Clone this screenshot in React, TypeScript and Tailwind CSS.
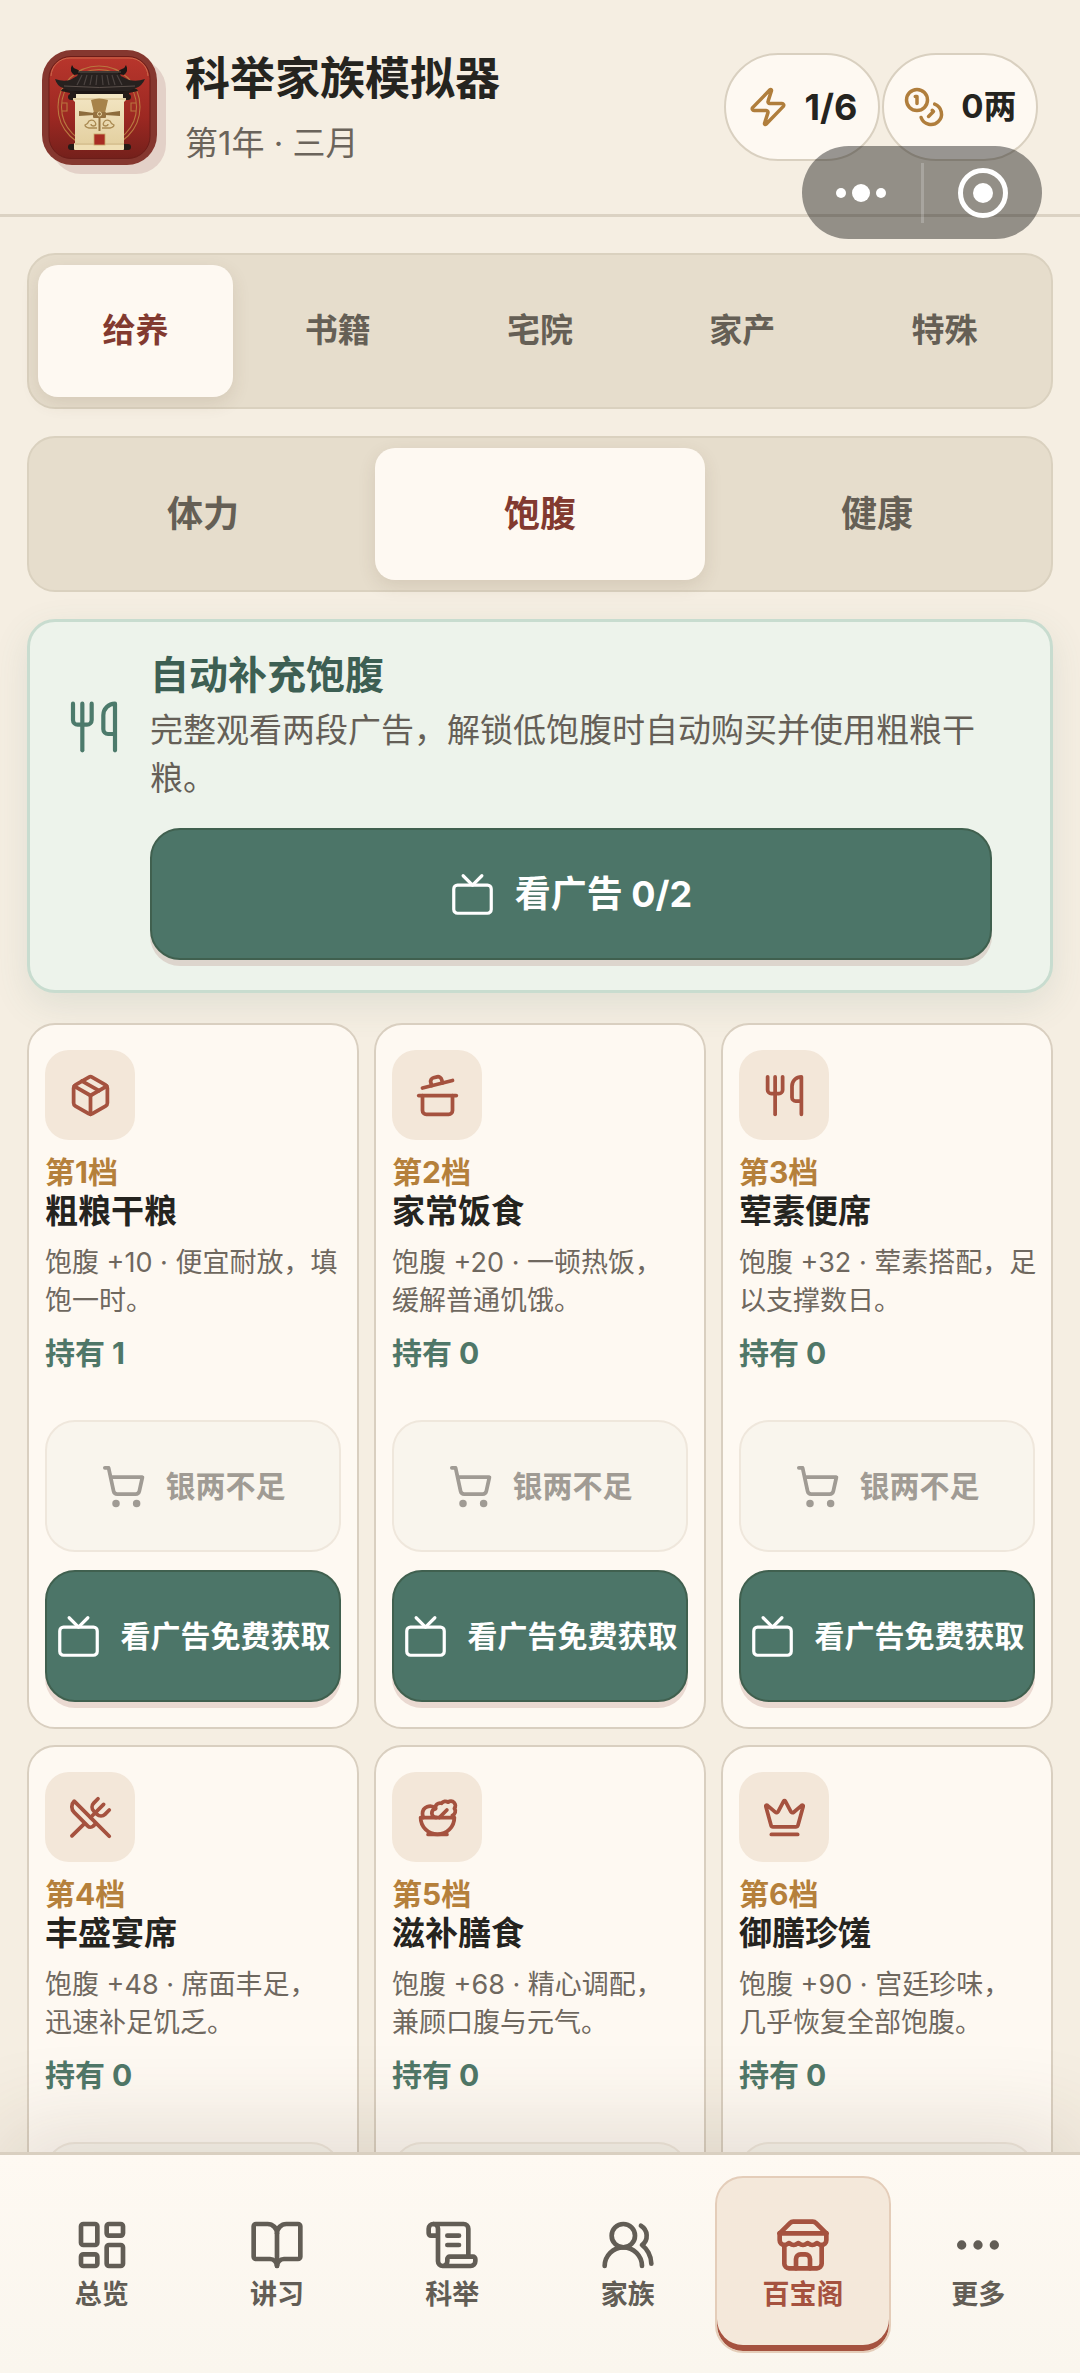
import {
  BookOpen,
  CookingPot,
  Crown,
  Ellipsis,
  LayoutDashboard,
  Package,
  Salad,
  ScrollText,
  ShoppingCart,
  Tv,
  UsersRound,
  Utensils,
  UtensilsCrossed,
  Zap,
} from "lucide-react";

const categories = ["给养", "书籍", "宅院", "家产", "特殊"];
const needs = ["体力", "饱腹", "健康"];

const goods = [
  { tier: "第1档", name: "粗粮干粮", desc: "饱腹 +10 · 便宜耐放，填\n饱一时。", owned: 1, icon: Package },
  { tier: "第2档", name: "家常饭食", desc: "饱腹 +20 · 一顿热饭，\n缓解普通饥饿。", owned: 0, icon: CookingPot },
  { tier: "第3档", name: "荤素便席", desc: "饱腹 +32 · 荤素搭配，足\n以支撑数日。", owned: 0, icon: Utensils },
  { tier: "第4档", name: "丰盛宴席", desc: "饱腹 +48 · 席面丰足，\n迅速补足饥乏。", owned: 0, icon: UtensilsCrossed },
  { tier: "第5档", name: "滋补膳食", desc: "饱腹 +68 · 精心调配，\n兼顾口腹与元气。", owned: 0, icon: Salad },
  { tier: "第6档", name: "御膳珍馐", desc: "饱腹 +90 · 宫廷珍味，\n几乎恢复全部饱腹。", owned: 0, icon: Crown },
];

const navItems = [
  { label: "总览", icon: LayoutDashboard },
  { label: "讲习", icon: BookOpen },
  { label: "科举", icon: ScrollText },
  { label: "家族", icon: UsersRound },
  { label: "百宝阁", icon: StoreIcon, active: true },
  { label: "更多", icon: Ellipsis },
];

function StoreIcon({ className }: { className?: string }) {
  return (
    <svg
      viewBox="0 0 24 24"
      fill="none"
      stroke="currentColor"
      strokeWidth="2"
      strokeLinecap="round"
      strokeLinejoin="round"
      className={className}
    >
      <path d="m2 7 4.41-4.41A2 2 0 0 1 7.83 2h8.34a2 2 0 0 1 1.42.59L22 7" />
      <path d="M4 12v8a2 2 0 0 0 2 2h12a2 2 0 0 0 2-2v-8" />
      <path d="M15 22v-4a2 2 0 0 0-2-2h-2a2 2 0 0 0-2 2v4" />
      <path d="M2 7h20" />
      <path d="M22 7v3a2 2 0 0 1-2 2a2.7 2.7 0 0 1-1.59-.63.7.7 0 0 0-.82 0A2.7 2.7 0 0 1 16 12a2.7 2.7 0 0 1-1.59-.63.7.7 0 0 0-.82 0A2.7 2.7 0 0 1 12 12a2.7 2.7 0 0 1-1.59-.63.7.7 0 0 0-.82 0A2.7 2.7 0 0 1 8 12a2.7 2.7 0 0 1-1.59-.63.7.7 0 0 0-.82 0A2.7 2.7 0 0 1 4 12a2 2 0 0 1-2-2V7" />
    </svg>
  );
}

function CoinsIcon({ className }: { className?: string }) {
  return (
    <svg
      viewBox="0 0 24 24"
      fill="none"
      stroke="currentColor"
      strokeWidth="2"
      strokeLinecap="round"
      strokeLinejoin="round"
      className={className}
    >
      <circle cx="8" cy="8" r="6" />
      <path d="M18.09 10.37A6 6 0 1 1 10.34 18" />
      <path d="M7 6h1v4" />
      <path d="m16.71 13.88.7.71-2.82 2.82" />
    </svg>
  );
}

function Logo() {
  return (
    <svg
      viewBox="0 0 115 115"
      className="size-[115px] shrink-0 rounded-[30px] shadow-[9px_9px_0_#e3d1c8]"
      role="img"
      aria-label="科举家族模拟器"
    >
      <defs>
        <linearGradient id="lacquer" x1="0" y1="0" x2="0" y2="1">
          <stop offset="0" stopColor="#b8362c" />
          <stop offset="0.6" stopColor="#9c2822" />
          <stop offset="1" stopColor="#74201b" />
        </linearGradient>
        <linearGradient id="paper" x1="0" y1="0" x2="0" y2="1">
          <stop offset="0" stopColor="#f3e6c4" />
          <stop offset="1" stopColor="#e3cf9f" />
        </linearGradient>
      </defs>
      <rect width="115" height="115" fill="#85372f" />
      <rect x="7" y="6.500" width="101" height="102" rx="22" fill="url(#lacquer)" stroke="#6b1d19" strokeWidth="1" />
      <path d="M9 26A19 19 0 0 1 28 8h59a19 19 0 0 1 19 18" fill="none" stroke="#d07a55" strokeWidth="0.800" />

      {/* gold ring behind the gate */}
      <g fill="none" stroke="#b9773f" strokeWidth="1.100">
        <circle cx="57" cy="57" r="41" />
        <circle cx="57" cy="57" r="37.500" />
        <path d="M20 53h5v8h-5M94 53h-5v8h5" />
      </g>

      {/* scroll */}
      <rect x="26" y="44" width="63" height="6" rx="3" fill="#241b17" />
      <path d="M31 43h53v7l-2 2v44H33V52l-2-2z" fill="url(#paper)" />
      <path d="M31 49h53" stroke="#c9ad76" strokeWidth="0.800" />
      <rect x="26" y="94" width="63" height="6" rx="3" fill="#241b17" />
      <rect x="32" y="93" width="50" height="7" rx="1" fill="#efdfb5" />
      <path d="M33 94h49" stroke="#b99a62" strokeWidth="0.800" />

      {/* official's hat and clouds */}
      <path d="M49 50q8-3 17 0l-3 13H52z" fill="#a7834a" />
      <path d="M37 61l15 2v2l-15 1zM78 61l-15 2v2l15 1z" fill="#8d6c3c" />
      <rect x="51" y="62" width="13" height="6" rx="1" fill="#957240" />
      <circle cx="57.500" cy="64" r="2" fill="none" stroke="#e6d3a2" strokeWidth="1" />
      <path d="M57.500 67v14" stroke="#967542" strokeWidth="2" />
      <path
        d="M55 78H47q-4-1-4-3 3-1 4-4 4-2 6 1 2 3-1 4-3 0-3-2M60 78h8q4-1 4-3-3-1-4-4-4-2-6 1-2 3 1 4 3 0 3-2"
        fill="none"
        stroke="#aa8a52"
        strokeWidth="1.300"
      />
      <rect x="52" y="84" width="11" height="11" fill="#a82c23" stroke="#c9a86a" strokeWidth="0.800" />

      {/* tiled roof */}
      <path d="M28 37h58v7H28z" fill="#1d1614" />
      <path d="M24 38q-4 0-5 3l9 2v5h6v-6zM91 38q4 0 5 3l-9 2v5h-6v-6z" fill="#241b18" />
      <path
        d="M38 21h38l3 5 8 4q8 2 16-1-3 7-9 9l-7 3H28l-7-3q-6-2-8-9 8 3 15 1l7-4z"
        fill="#27211f"
      />
      <path d="M30 15q-3 6 2 10l6-1q0-4-4-5-3-1-4-4zM84 15q3 6-2 10l-6-1q0-4 4-5 3-1 4-4z" fill="#1c1715" />
      <path
        d="M40 25l-5 10M45 25l-3 10M50 25l-2 10M55 25l-1 10M60 25l1 10M65 25l2 10M70 25l3 10M75 25l5 10"
        stroke="#4b4340"
        strokeWidth="1.200"
      />
      <path d="M36 22h43M22 36q35 3 71 0" fill="none" stroke="#5b504b" strokeWidth="1" />
    </svg>
  );
}

function Tabs({ items, active, label, size }: { items: string[]; active: string; label: string; size: string }) {
  return (
    <div
      role="tablist"
      aria-label={label}
      className="flex gap-[7px] rounded-[28px] border-2 border-[#dad1bf] bg-[#e6ddcc] px-[9px] py-[10px]"
    >
      {items.map((item) => (
        <button
          key={item}
          role="tab"
          aria-selected={item === active}
          className={`h-[132px] flex-1 rounded-[20px] font-bold ${size} ${
            item === active
              ? "bg-[#fef9f2] text-[#823a30] shadow-[0_6px_18px_rgba(90,65,40,0.12)]"
              : "text-[#655f55]"
          }`}
        >
          {item}
        </button>
      ))}
    </div>
  );
}

export default function App() {
  return (
    <div className="relative flex h-screen flex-col overflow-hidden bg-[#f5eee2] font-[Inter,'Noto_Sans_CJK_SC',sans-serif] text-[#25241f]">
      <header className="flex items-center border-b-[3px] border-[#dbd2c3] px-[42px] py-[47px]">
        <Logo />
        <div className="ml-7 min-w-0 flex-1">
          <h1 className="text-[45px] leading-[64px] font-bold">科举家族模拟器</h1>
          <p className="mt-2 text-[33px] leading-[48px] text-[#6b645b]">第1年 · 三月</p>
        </div>
        <div className="flex gap-[2px] font-bold">
          <div className="flex h-[108px] min-w-[156px] items-center justify-center gap-4 rounded-full border-2 border-[#d9d0c0] bg-[#fef9f2]">
            <Zap className="size-[42px] text-[#b07e3c]" />
            <span className="text-[36px]">1/6</span>
          </div>
          <div className="flex h-[108px] min-w-[156px] items-center justify-center gap-4 rounded-full border-2 border-[#d9d0c0] bg-[#fef9f2]">
            <CoinsIcon className="size-[42px] text-[#b07e3c]" />
            <span className="text-[33px]">0两</span>
          </div>
        </div>
      </header>

      {/* host app capsule, floats over the header */}
      <div className="absolute top-[146px] right-[38px] z-20 flex h-[93px] w-[240px] items-center rounded-full bg-black/40">
        <button aria-label="更多" className="flex h-full flex-1 items-center justify-center gap-[6px]">
          <span className="size-[10px] rounded-full bg-white" />
          <span className="size-[18px] rounded-full bg-white" />
          <span className="size-[10px] rounded-full bg-white" />
        </button>
        <span className="h-[60px] w-[3px] bg-white/20" />
        <button aria-label="关闭" className="flex h-full flex-1 items-center justify-center">
          <span className="flex size-[50px] items-center justify-center rounded-full border-[5px] border-white">
            <span className="size-5 rounded-full bg-white" />
          </span>
        </button>
      </div>

      <main className="flex min-h-0 flex-1 flex-col gap-[27px] overflow-y-auto px-[27px] pt-9 [scrollbar-width:none]">
        <Tabs items={categories} active="给养" label="分类" size="text-[33px]" />
        <Tabs items={needs} active="饱腹" label="需求" size="text-[36px]" />

        <section className="grid grid-cols-[56px_1fr] gap-x-7 gap-y-[26px] rounded-[28px] border-[3px] border-[#c8dccf] bg-[#edf3eb] py-[30px] pr-[58px] pl-9 shadow-[0_12px_36px_rgba(76,117,104,0.12)]">
          <Utensils strokeWidth={1.8} className="size-14 self-center text-[#4c7a6b]" />
          <div>
            <h2 className="text-[39px] leading-[46px] font-bold text-[#3d5f53]">自动补充饱腹</h2>
            <p className="mt-2 text-[33px] leading-[48px] text-[#655f57]">
              完整观看两段广告，解锁低饱腹时自动购买并使用粗粮干粮。
            </p>
          </div>
          <button className="col-start-2 flex h-[132px] items-center justify-center gap-5 rounded-[30px] border-2 border-[#40604f] bg-[#4c7568] text-[36px] font-bold text-white shadow-[0_6px_0_#ddd5cd]">
            <Tv strokeWidth={1.7} className="size-[45px]" />
            看广告 0/2
          </button>
        </section>

        <div className="mt-[3px] grid grid-cols-3 gap-x-[15px] gap-y-4">
          {goods.map((item) => (
            <article
              key={item.name}
              className="rounded-[28px] border-2 border-[#d9cfc0] bg-[#fef9f2] px-4 py-[25px]"
            >
              <div className="flex size-[90px] items-center justify-center rounded-[24px] bg-[#f3e7d9] text-[#a5523f]">
                <item.icon className="size-[45px]" />
              </div>
              <p className="mt-[13px] text-[30px] leading-[38px] font-bold text-[#b5803b]">{item.tier}</p>
              <h3 className="text-[33px] leading-[40px] font-bold">{item.name}</h3>
              <p className="mt-[13px] text-[27px] leading-[38px] whitespace-pre text-[#6f685f]">{item.desc}</p>
              <p className="mt-[14px] text-[30px] leading-[38px] font-bold text-[#4f7768]">持有 {item.owned}</p>
              <button
                disabled
                className="mt-12 flex h-[132px] w-full items-center justify-center gap-5 rounded-[30px] border-2 border-[#efe7dc] bg-[#f9f5ed] text-[30px] font-bold text-[#a09b94]"
              >
                <ShoppingCart className="size-[45px] shrink-0" />
                银两不足
              </button>
              <button className="mt-[18px] flex h-[132px] w-full items-center justify-center gap-5 rounded-[30px] border-2 border-[#40604f] bg-[#4c7568] text-[30px] font-bold whitespace-nowrap text-white shadow-[0_6px_0_#ead9d1]">
                <Tv strokeWidth={1.7} className="size-[45px] shrink-0" />
                看广告免费获取
              </button>
            </article>
          ))}
        </div>
      </main>

      <nav className="relative z-10 flex border-t-[3px] border-[#d9cfc0] bg-linear-to-b from-[#fef9f2] to-[#faf6ee] px-[14px] pt-[21px] pb-5 shadow-[0_-24px_90px_rgba(80,60,35,0.14)]">
        {navItems.map((item) => (
          <a
            key={item.label}
            href="#"
            aria-current={item.active ? "page" : undefined}
            className={`flex h-[177px] flex-1 flex-col items-center justify-center gap-1 rounded-[28px] border-2 text-[27px] leading-9 font-bold ${
              item.active
                ? "border-[#e4cdb9] bg-[#f4e8da] text-[#a5523f] shadow-[inset_0_-6px_0_#a5523f]"
                : "border-transparent text-[#625d55]"
            }`}
          >
            <item.icon className="size-14" />
            {item.label}
          </a>
        ))}
      </nav>
    </div>
  );
}
